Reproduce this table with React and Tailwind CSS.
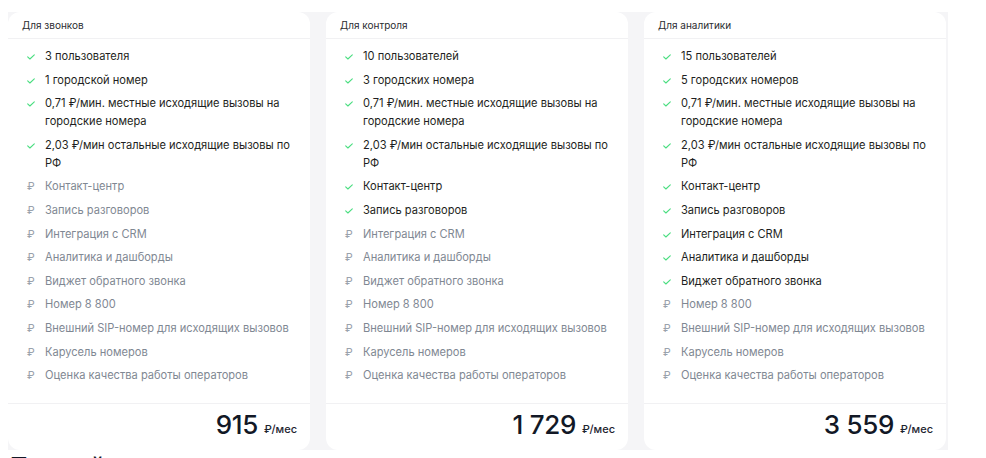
import React from 'react'

const allFeatures = [
  'Контакт-центр',
  'Запись разговоров',
  'Интеграция с CRM',
  'Аналитика и дашборды',
  'Виджет обратного звонка',
  'Номер 8 800',
  'Внешний SIP-номер для исходящих вызовов',
  'Карусель номеров',
  'Оценка качества работы операторов',
]

const plans = [
  {
    title: 'Для звонков',
    users: '3 пользователя',
    numbers: '1 городской номер',
    included: 0,
    price: '915',
  },
  {
    title: 'Для контроля',
    users: '10 пользователей',
    numbers: '3 городских номера',
    included: 2,
    price: '1 729',
  },
  {
    title: 'Для аналитики',
    users: '15 пользователей',
    numbers: '5 городских номеров',
    included: 5,
    price: '3 559',
  },
]

function Check() {
  return (
    <svg width="8" height="6" viewBox="0 0 8 6" fill="none" className="mt-[7px]">
      <path d="M0.7 2.9L2.9 5L7.3 0.8" stroke="#4ade80" strokeWidth="1.1" strokeLinecap="round" strokeLinejoin="round" />
    </svg>
  )
}

function Item({ on, children }) {
  return (
    <li className="flex items-start">
      <span className="w-[18px] shrink-0 flex justify-start">
        {on ? <Check /> : <span className="text-[11px] text-[#9aa2ac] leading-[18px]">₽</span>}
      </span>
      <span className={on ? 'flex-1 text-[#1e1f22]' : 'flex-1 text-[#7f8893]'}>{children}</span>
    </li>
  )
}

function Card({ plan }) {
  return (
    <div className="w-[302px] shrink-0 bg-white rounded-[12px] flex flex-col">
      <div className="h-[27px] flex items-center px-[14px] border-b border-[#f1f1f3] text-[10px] text-[#2b2d31]">
        {plan.title}
      </div>
      <ul className="flex flex-col gap-[5.6px] pt-[8px] pb-[19px] pl-[19px] pr-[10px] text-[11.1px] leading-[18px]">
        <Item on>{plan.users}</Item>
        <Item on>{plan.numbers}</Item>
        <Item on>0,71 ₽/мин. местные исходящие вызовы на городские номера</Item>
        <Item on>2,03 ₽/мин остальные исходящие вызовы по РФ</Item>
        {allFeatures.map((f, i) => (
          <Item key={f} on={i < plan.included}>{f}</Item>
        ))}
      </ul>
      <div className="border-t border-[#f1f1f3] h-[47px] flex items-end justify-end pr-[13px] pb-[10px] gap-[6px]">
        <span className="text-[26px] leading-[30px] font-medium text-[#121826] tracking-[-0.3px]">{plan.price}</span>
        <span className="text-[11px] leading-[20px] font-medium text-[#1e2430] pb-[1px]">₽/мес</span>
      </div>
    </div>
  )
}

export default function App() {
  return (
    <div className="bg-white w-[986px] h-[458px] overflow-hidden pt-[12px]" style={{ fontFamily: 'Inter, "Noto Sans", sans-serif' }}>
      <div className="ml-[8px] w-[940px] bg-[#f5f5f7] flex gap-[16px]">
        {plans.map((p) => (
          <Card key={p.title} plan={p} />
        ))}
      </div>
      <h2 className="ml-[10px] mt-[5px] text-[24px] leading-[24px] font-semibold text-[#121826]">Полный список</h2>
    </div>
  )
}
